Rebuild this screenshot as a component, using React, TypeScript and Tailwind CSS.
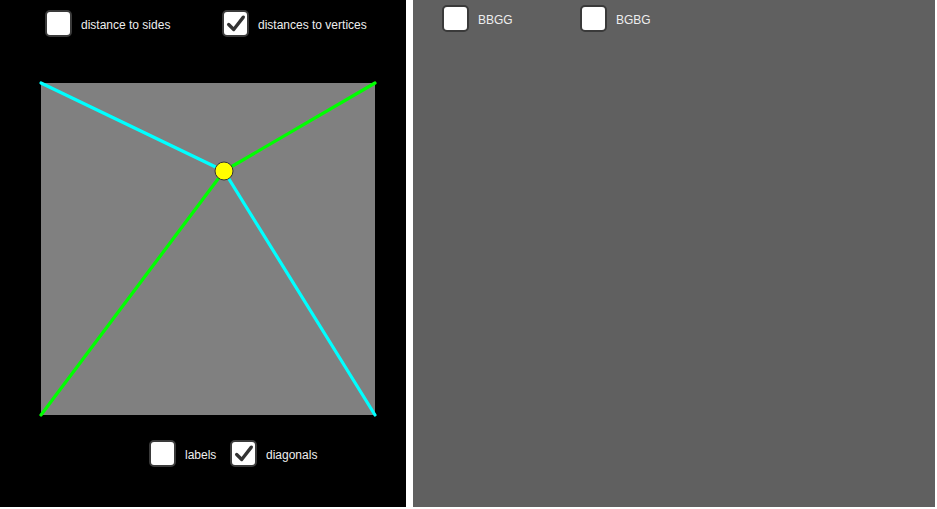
import React, { useState } from 'react';

const Check = () => (
    <svg viewBox="0 0 24 24" className="w-[22px] h-[22px]">
        <path d="M4 12.5 L9.5 18 L20 4.5" fill="none" stroke="#333" strokeWidth="3.6" strokeLinecap="round" strokeLinejoin="round" />
    </svg>
);

interface BoxProps {
    label: string;
    checked: boolean;
    onToggle: () => void;
    width?: string;
}

const CheckItem = ({ label, checked, onToggle, width }: BoxProps) => (
    <button onClick={onToggle} className={`flex items-center gap-[9px] text-left ${width ?? ''}`}>
        <span className="w-[27px] h-[27px] shrink-0 rounded-[5px] border-2 border-[#3a3a3a] bg-white flex items-center justify-center">
            {checked && <Check />}
        </span>
        <span className="text-[12px] text-[#eeeeee] leading-none pt-[2px]">{label}</span>
    </button>
);

export default function App() {
    const [sides, setSides] = useState(false);
    const [vertices, setVertices] = useState(true);
    const [labels, setLabels] = useState(false);
    const [diagonals, setDiagonals] = useState(true);
    const [bbgg, setBbgg] = useState(false);
    const [bgbg, setBgbg] = useState(false);

    const p = { x: 224, y: 171 };

    return (
        <div className="w-[935px] h-[507px] flex" style={{ fontFamily: '"Liberation Sans", Arial, sans-serif' }}>
            {/* Left: square */}
            <div className="w-[406px] h-full bg-black flex flex-col">
                <div className="flex pt-[10px] pl-[45px]">
                    <CheckItem label="distance to sides" checked={sides} onToggle={() => setSides(!sides)} width="w-[177px]" />
                    <CheckItem label="distances to vertices" checked={vertices} onToggle={() => setVertices(!vertices)} />
                </div>
                <svg width="406" height="403" viewBox="0 37 406 403" className="block">
                    <rect x="41" y="83" width="334" height="332" fill="#808080" />
                    {vertices && (
                        <g strokeWidth="3.2" strokeLinecap="round">
                            <line x1="41" y1="83" x2={p.x} y2={p.y} stroke="#00ffff" />
                            <line x1="375" y1="415" x2={p.x} y2={p.y} stroke="#00ffff" />
                            <line x1="375" y1="83" x2={p.x} y2={p.y} stroke="#00ff00" />
                            <line x1="41" y1="415" x2={p.x} y2={p.y} stroke="#00ff00" />
                        </g>
                    )}
                    <circle cx={p.x} cy={p.y} r="9" fill="#ffff00" stroke="#333" strokeWidth="1" />
                </svg>
                <div className="flex pl-[149px]">
                    <CheckItem label="labels" checked={labels} onToggle={() => setLabels(!labels)} width="w-[81px]" />
                    <CheckItem label="diagonals" checked={diagonals} onToggle={() => setDiagonals(!diagonals)} />
                </div>
            </div>

            <div className="w-[7px] h-full bg-white" />

            {/* Right */}
            <div className="flex-1 h-full bg-[#606060]">
                <div className="flex pt-[5px] pl-[29px]">
                    <CheckItem label="BBGG" checked={bbgg} onToggle={() => setBbgg(!bbgg)} width="w-[138px]" />
                    <CheckItem label="BGBG" checked={bgbg} onToggle={() => setBgbg(!bgbg)} />
                </div>
            </div>
        </div>
    );
}
